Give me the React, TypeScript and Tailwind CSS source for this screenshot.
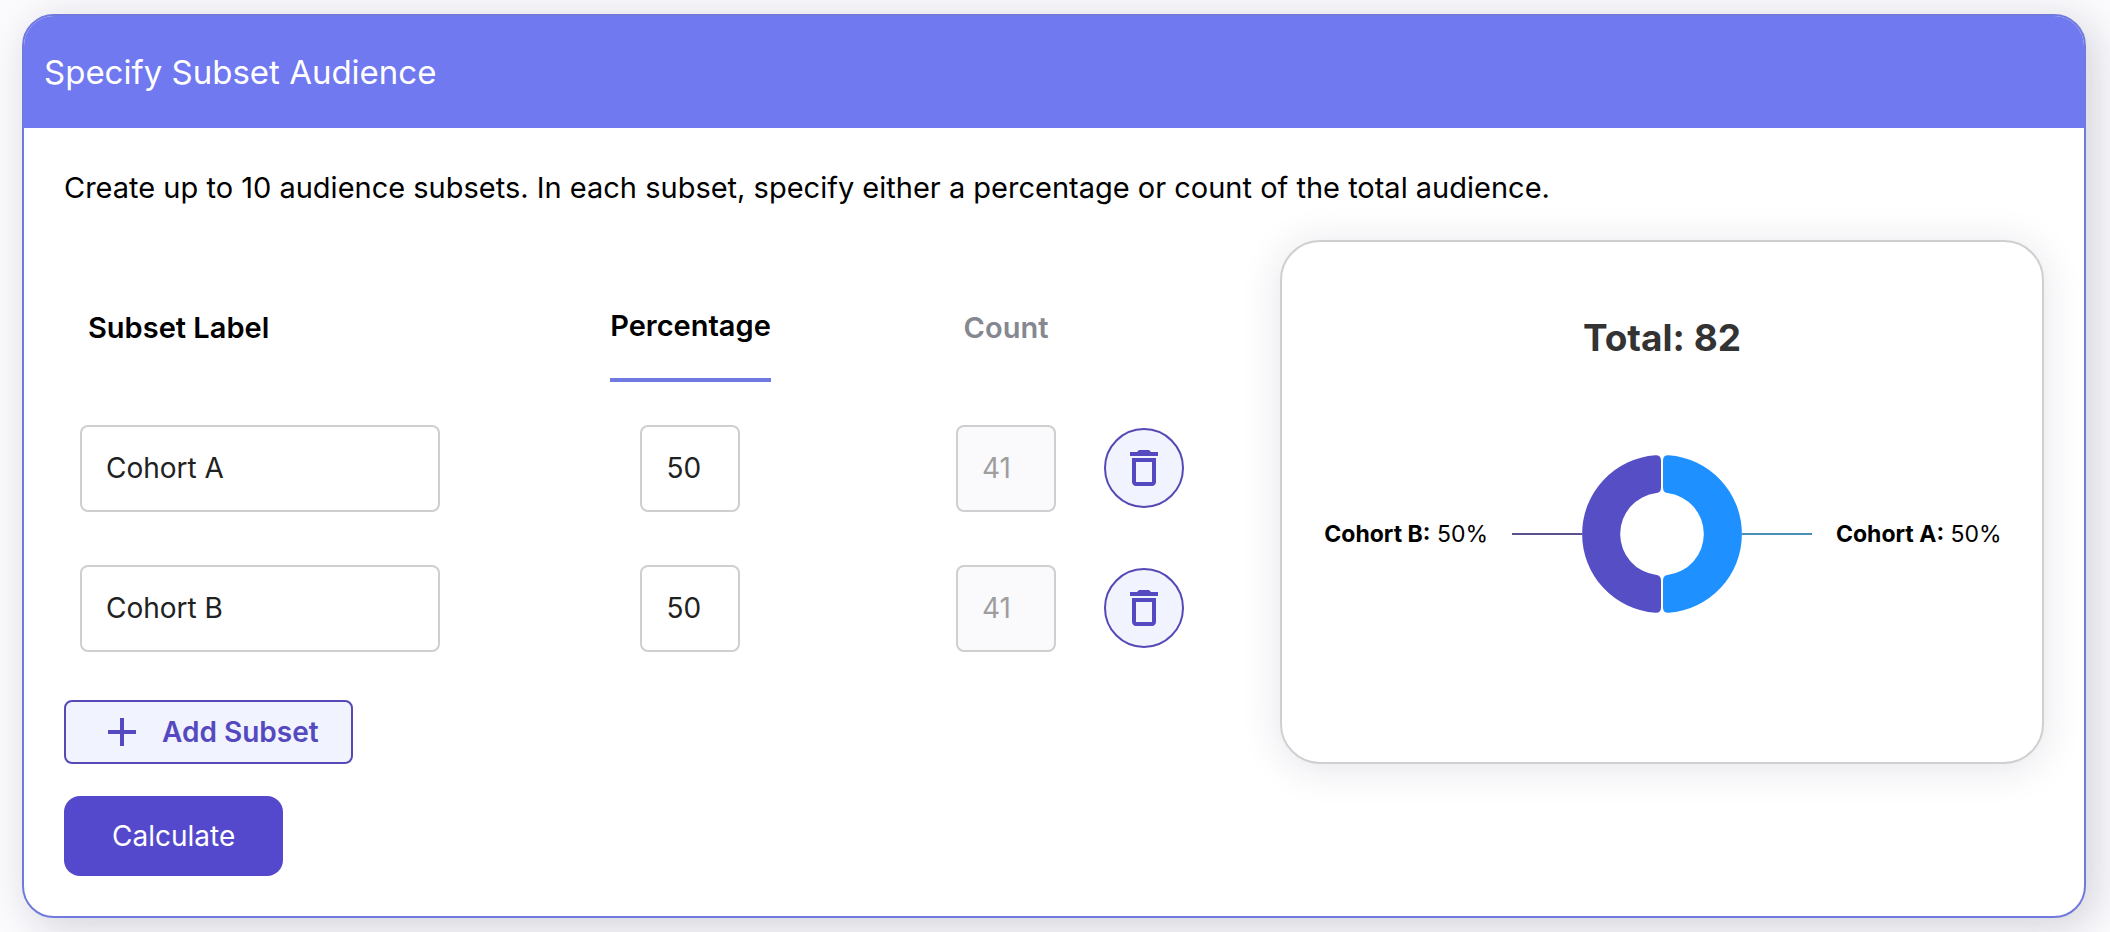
import { useState } from 'react'
import { MdAdd, MdDeleteOutline } from 'react-icons/md'

type Subset = {
  id: number
  label: string
  percentage: string
}

const TOTAL = 82
const MAX_SUBSETS = 10

const fieldClasses = 'h-[87px] rounded-lg border-2 border-[#cfcfcf] px-6 text-[28px] leading-10'

function SubsetRow({ subset, onChange, onRemove }: {
  subset: Subset
  onChange: (next: Subset) => void
  onRemove: () => void
}) {
  const count = Math.round((Number(subset.percentage) / 100) * TOTAL)

  return (
    <tr className="h-[140px]">
      <td className="pl-4">
        <input
          type="text"
          aria-label="Subset Label"
          value={subset.label}
          onChange={e => onChange({ ...subset, label: e.target.value })}
          className={`${fieldClasses} block w-[360px] bg-white text-[#212121]`}
        />
      </td>
      <td>
        <input
          type="text"
          aria-label="Percentage"
          value={subset.percentage}
          onChange={e => onChange({ ...subset, percentage: e.target.value })}
          className={`${fieldClasses} mx-auto block w-[100px] bg-white text-[#212121]`}
        />
      </td>
      <td>
        <input
          type="text"
          aria-label="Count"
          value={count}
          disabled
          className={`${fieldClasses} mx-auto block w-[100px] bg-[#fafafd] text-[#9e9e9e]`}
        />
      </td>
      <td>
        <button
          type="button"
          aria-label="Delete subset"
          onClick={onRemove}
          className="flex size-20 items-center justify-center rounded-full border-2 border-[#5549b5] bg-[#f1f3fe] text-[#5549c0]"
        >
          <MdDeleteOutline className="size-12" />
        </button>
      </td>
    </tr>
  )
}

function AudienceChart() {
  return (
    <section className="rounded-[40px] border-2 border-[#cfcfcf] bg-white px-4 shadow-[0_4px_40px_rgba(30,30,80,0.12)]">
      <h2 className="mt-[72px] text-center text-[37px] leading-12 font-bold text-[#333333]">Total: {TOTAL}</h2>
      <div className="mt-[92px] grid grid-cols-[1fr_300px_1fr] items-center text-[23px] leading-8 text-black">
        <p className="pr-6 text-right whitespace-nowrap"><b>Cohort B:</b> 50%</p>
        <svg viewBox="0 0 300 160" className="h-40 w-full" aria-hidden="true">
          <path d="M0 80H70" stroke="#5b4f8c" strokeWidth="2" />
          <path d="M230 80H300" stroke="#4a8fb8" strokeWidth="2" />
          <path
            d="M149 6.5V33.500Q149 38.500 144.500 39A41.300 41.300 0 0 0 144.500 121Q149 121.500 149 126.500V153.500Q149 159 143.500 158.800A79 79 0 0 1 143.500 1.200Q149 1 149 6.500Z"
            fill="#554ec4"
          />
          <path
            d="M151 6.500V33.500Q151 38.500 155.500 39A41.300 41.300 0 0 1 155.500 121Q151 121.500 151 126.500V153.500Q151 159 156.500 158.800A79 79 0 0 0 156.500 1.200Q151 1 151 6.500Z"
            fill="#1e90ff"
          />
        </svg>
        <p className="pl-6 whitespace-nowrap"><b>Cohort A:</b> 50%</p>
      </div>
    </section>
  )
}

function App() {
  const [subsets, setSubsets] = useState<Subset[]>([
    { id: 1, label: 'Cohort A', percentage: '50' },
    { id: 2, label: 'Cohort B', percentage: '50' },
  ])

  const addSubset = () => {
    if (subsets.length >= MAX_SUBSETS) return
    setSubsets([...subsets, { id: Date.now(), label: '', percentage: '0' }])
  }

  return (
    <div className="min-h-screen bg-[#fbfbfe] pt-[14px] pr-6 pb-[14px] pl-[22px] font-['Inter',sans-serif]">
      <main className="overflow-hidden rounded-[32px] border-2 border-[#7079dd] bg-white shadow-[8px_8px_40px_rgba(20,20,40,0.18)]">
        <header className="flex h-28 items-center bg-[#7079f0] px-5">
          <h1 className="text-[33px] leading-10 text-white">Specify Subset Audience</h1>
        </header>

        <div className="p-10">
          <p className="text-[29px] leading-10 text-black">
            Create up to 10 audience subsets. In each subset, specify either a percentage or count of the total audience.
          </p>

          <div className="mt-8 grid grid-cols-[3fr_2fr] gap-[70px]">
            <div className="pr-2.5">
              <table className="w-full table-fixed">
                <colgroup>
                  <col className="w-[36%]" />
                  <col />
                  <col className="w-[196px]" />
                  <col className="w-24" />
                </colgroup>
                <thead>
                  <tr className="h-[158px] text-[29px] leading-10 text-black">
                    <th className="pt-[18px] pl-6 text-left font-semibold">Subset Label</th>
                    <th className="pt-[18px]">
                      <button type="button" className="h-[108px] border-b-4 border-[#7079e0] font-semibold">Percentage</button>
                    </th>
                    <th className="pt-[18px]">
                      <button type="button" className="h-[108px] font-semibold text-[#858891]">Count</button>
                    </th>
                    <td />
                  </tr>
                </thead>
                <tbody>
                  {subsets.map(subset => (
                    <SubsetRow
                      key={subset.id}
                      subset={subset}
                      onChange={next => setSubsets(subsets.map(s => (s.id === next.id ? next : s)))}
                      onRemove={() => setSubsets(subsets.filter(s => s.id !== subset.id))}
                    />
                  ))}
                </tbody>
              </table>
              <button
                type="button"
                onClick={addSubset}
                className="mt-[22px] flex h-16 items-center gap-4 rounded-lg border-2 border-[#5549b5] bg-[#f1f3fe] px-8 text-[28px] leading-10 font-semibold text-[#5549c0]"
              >
                <MdAdd className="size-12" />
                Add Subset
              </button>
            </div>
            <AudienceChart />
          </div>

          <button type="button" className="mt-8 h-20 rounded-2xl bg-[#5449cc] px-12 text-[28px] leading-10 text-white">
            Calculate
          </button>
        </div>
      </main>
    </div>
  )
}

export default App
